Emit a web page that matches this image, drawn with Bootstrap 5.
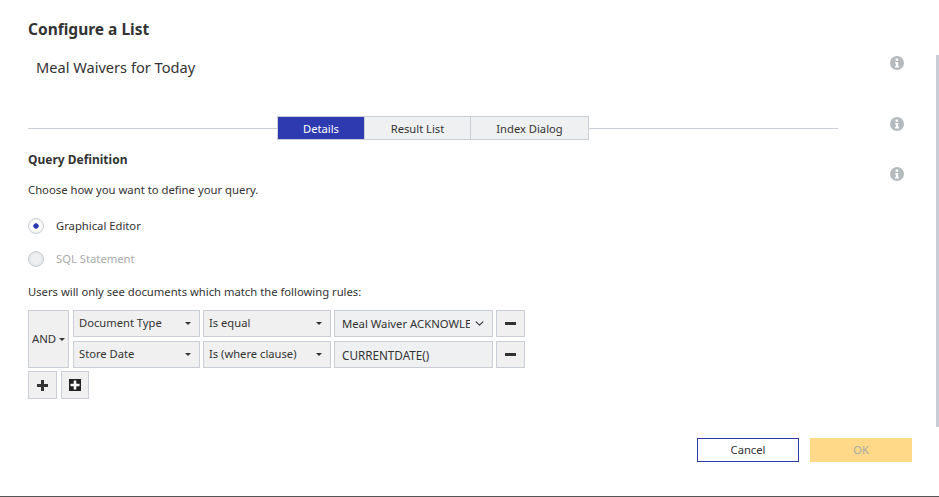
<!DOCTYPE html>
<html lang="en">
<head>
<meta charset="utf-8">
<title>Configure a List</title>
<link href="https://cdn.jsdelivr.net/npm/bootstrap@5.3.0/dist/css/bootstrap.min.css" rel="stylesheet">
<style>
html,body{height:497px;overflow:hidden;background:#fff;}
body{font-family:"Noto Sans","Open Sans","Liberation Sans",sans-serif;font-size:11.25px;color:#333;line-height:16px;}
.dlg{height:497px;padding:19px 0 0 28px;border-bottom:1px solid #555;position:relative;}
.main-col{width:810px;}
.info-ico{width:14px;height:14px;display:block;margin-left:52px;flex:none;}
.ico-up5{margin-bottom:8px;}
.ico-up4{margin-bottom:8px;}
.ico-up1{margin-bottom:2px;}
.dlg-title{font-size:15.5px;font-weight:700;line-height:20px;margin:0;color:#333;}
.name-row{margin-top:18px;height:20px;}
.list-name{font-size:14.6px;line-height:20px;padding-left:8px;color:#333;}
.tab-row{margin-top:39px;height:24px;}
.tab-rule{flex:1;height:1px;background:#c8ced3;}
.tab-group{border-radius:0;}
.tab-btn{height:24px;padding:0;border:1px solid #c8ced3;border-radius:0!important;background:#eef0f1;color:#333;font-size:11.2px;line-height:21px;margin-left:-1px;}
.tab-btn.on{background:#2e3ab0;border-color:#c8ced3;color:#fff;}
.w-a{width:88px;margin-left:0;}.w-b{width:107px;}.w-c{width:119px;}
.qhead{margin-top:13px;height:43px;}
.qtitle{font-weight:700;font-size:12px;line-height:16px;margin:0 0 14px;color:#333;}
.qtext{margin:0;line-height:16px;font-size:11.3px;}
.radio-row{margin:0;padding:0;min-height:0;height:16px;display:flex;align-items:center;}
.radio-one{margin-top:22px;}
.radio-two{margin-top:17px;}
.radio-row .form-check-input{width:16px;height:16px;margin:0 12px 0 0;float:none;border:1px solid #c8ced3;background-color:#fff;box-shadow:inset 0 0 3px rgba(0,0,0,.12);opacity:1;}
.radio-row .form-check-input:checked{background-image:radial-gradient(circle,#2e3ab0 0 2.4px,transparent 3px);}
.radio-row .form-check-input:disabled{background-color:#eef0f1;}
.radio-row .form-check-label{color:#333;opacity:1;}
.radio-row .form-check-input:disabled~.form-check-label{color:#aaa;opacity:1;}
.rules-lead{margin:17px 0 0;line-height:16px;}
.rules{margin-top:10px;}
.and-btn{width:41px;height:58px;padding:0;border:1px solid #c8ced3;border-radius:0;background:#f0f0f0;color:#333;font-size:11.4px;margin-right:4px;}
.rule-line{height:27px;}
.rule-line+.rule-line{margin-top:4px;}
.pick{height:27px;border:1px solid #c8ced3;border-radius:0;background:#f0f0f0;color:#333;font-size:11.2px;padding:0 8px 0 5px;display:flex;align-items:center;justify-content:space-between;text-align:left;}
.pick-a{width:127px;margin-right:3px;}
.pick-b{width:128px;margin-right:3px;}
.val{width:159px;height:27px;margin-right:3px;border:1px solid #c8ced3;border-radius:0;background-color:#eef0f1;color:#333;font-size:11.7px;padding:0 22px 0 7px;line-height:25px;box-shadow:none;}
.form-control.val{padding-right:7px;}
.form-select.val{font-size:11.3px;background-position:right 7px center;background-size:11px 9px;}
.sq-btn{width:29px;height:27px;padding:0;border:1px solid #c8ced3;border-radius:0;background:#f0f0f0;display:flex;align-items:center;justify-content:center;}
.add-row{margin-top:3px;}
.add-row .sq-btn{height:28px;}
.add-row .sq-btn+.sq-btn{width:28px;margin-left:4px;}
.foot{margin-top:39px;width:884px;}
.foot-btn{width:102px;height:24px;padding:0;border-radius:0;font-size:11.2px;line-height:20px;}
.btn-cancel{border:1px solid #2e3ab0;background:#fff;color:#333;}
.btn-ok,.btn-ok:disabled{border:1px solid #ffd987;background:#ffd987;color:#a9a9a9;opacity:1;margin-left:11px;}
.vscroll{position:absolute;right:0;top:55px;width:3px;height:372px;background:#c8ced3;}
</style>
</head>
<body>
<div class="dlg">
  <h1 class="dlg-title">Configure a List</h1>
  <div class="d-flex align-items-center name-row">
    <div class="main-col list-name">Meal Waivers for Today</div>
    <svg class="info-ico ico-up5" viewBox="0 0 14 14"><circle cx="7" cy="7" r="7" fill="#b4babd"/><path d="M5.6 2.6h2.6v2.1H5.6zM5.2 6h3v4.1h.8v1.5H5v-1.5h.9V7.4h-.7z" fill="#fff"/></svg>
  </div>
  <div class="d-flex align-items-center tab-row">
    <div class="main-col d-flex align-items-center">
      <div class="tab-rule"></div>
      <div class="btn-group tab-group" role="group">
        <button type="button" class="btn tab-btn on w-a">Details</button>
        <button type="button" class="btn tab-btn w-b">Result List</button>
        <button type="button" class="btn tab-btn w-c">Index Dialog</button>
      </div>
      <div class="tab-rule"></div>
    </div>
    <svg class="info-ico ico-up4" viewBox="0 0 14 14"><circle cx="7" cy="7" r="7" fill="#b4babd"/><path d="M5.6 2.6h2.6v2.1H5.6zM5.2 6h3v4.1h.8v1.5H5v-1.5h.9V7.4h-.7z" fill="#fff"/></svg>
  </div>
  <div class="d-flex align-items-center qhead">
    <div class="main-col">
      <h2 class="qtitle">Query Definition</h2>
      <p class="qtext">Choose how you want to define your query.</p>
    </div>
    <svg class="info-ico ico-up1" viewBox="0 0 14 14"><circle cx="7" cy="7" r="7" fill="#b4babd"/><path d="M5.6 2.6h2.6v2.1H5.6zM5.2 6h3v4.1h.8v1.5H5v-1.5h.9V7.4h-.7z" fill="#fff"/></svg>
  </div>
  <div class="form-check radio-row radio-one">
    <input class="form-check-input" type="radio" name="qm" id="qm1" checked>
    <label class="form-check-label" for="qm1">Graphical Editor</label>
  </div>
  <div class="form-check radio-row radio-two">
    <input class="form-check-input" type="radio" name="qm" id="qm2" disabled>
    <label class="form-check-label" for="qm2">SQL Statement</label>
  </div>
  <p class="rules-lead">Users will only see documents which match the following rules:</p>
  <div class="rules d-flex">
    <button type="button" class="btn dropdown-toggle and-btn">AND</button>
    <div>
      <div class="d-flex rule-line">
        <button type="button" class="btn dropdown-toggle pick pick-a">Document Type</button>
        <button type="button" class="btn dropdown-toggle pick pick-b">Is equal</button>
        <select class="form-select val"><option>Meal Waiver ACKNOWLEDGEMENT</option></select>
        <button type="button" class="btn sq-btn" aria-label="Remove"><svg width="11" height="3" viewBox="0 0 11 3"><rect width="11" height="3" fill="#333"/></svg></button>
      </div>
      <div class="d-flex rule-line">
        <button type="button" class="btn dropdown-toggle pick pick-a">Store Date</button>
        <button type="button" class="btn dropdown-toggle pick pick-b">Is (where clause)</button>
        <input class="form-control val" type="text" value="CURRENTDATE()" readonly>
        <button type="button" class="btn sq-btn" aria-label="Remove"><svg width="11" height="3" viewBox="0 0 11 3"><rect width="11" height="3" fill="#333"/></svg></button>
      </div>
    </div>
  </div>
  <div class="d-flex add-row">
    <button type="button" class="btn sq-btn" aria-label="Add rule"><svg width="11" height="11" viewBox="0 0 11 11"><path d="M4 0h3v4h4v3H7v4H4V7H0V4h4z" fill="#333"/></svg></button>
    <button type="button" class="btn sq-btn" aria-label="Add group"><svg width="12" height="12" viewBox="0 0 12 12"><rect width="12" height="12" fill="#222"/><path d="M4.7 1.5h2.6v3.2h3.2v2.6H7.3v3.2H4.7V7.3H1.5V4.7h3.2z" fill="#fff"/></svg></button>
  </div>
  <div class="d-flex justify-content-end foot">
    <button type="button" class="btn foot-btn btn-cancel">Cancel</button>
    <button type="button" class="btn foot-btn btn-ok" disabled>OK</button>
  </div>
  <div class="vscroll"></div>
</div>
<script src="https://cdn.jsdelivr.net/npm/bootstrap@5.3.0/dist/js/bootstrap.bundle.min.js"></script>
</body>
</html>
